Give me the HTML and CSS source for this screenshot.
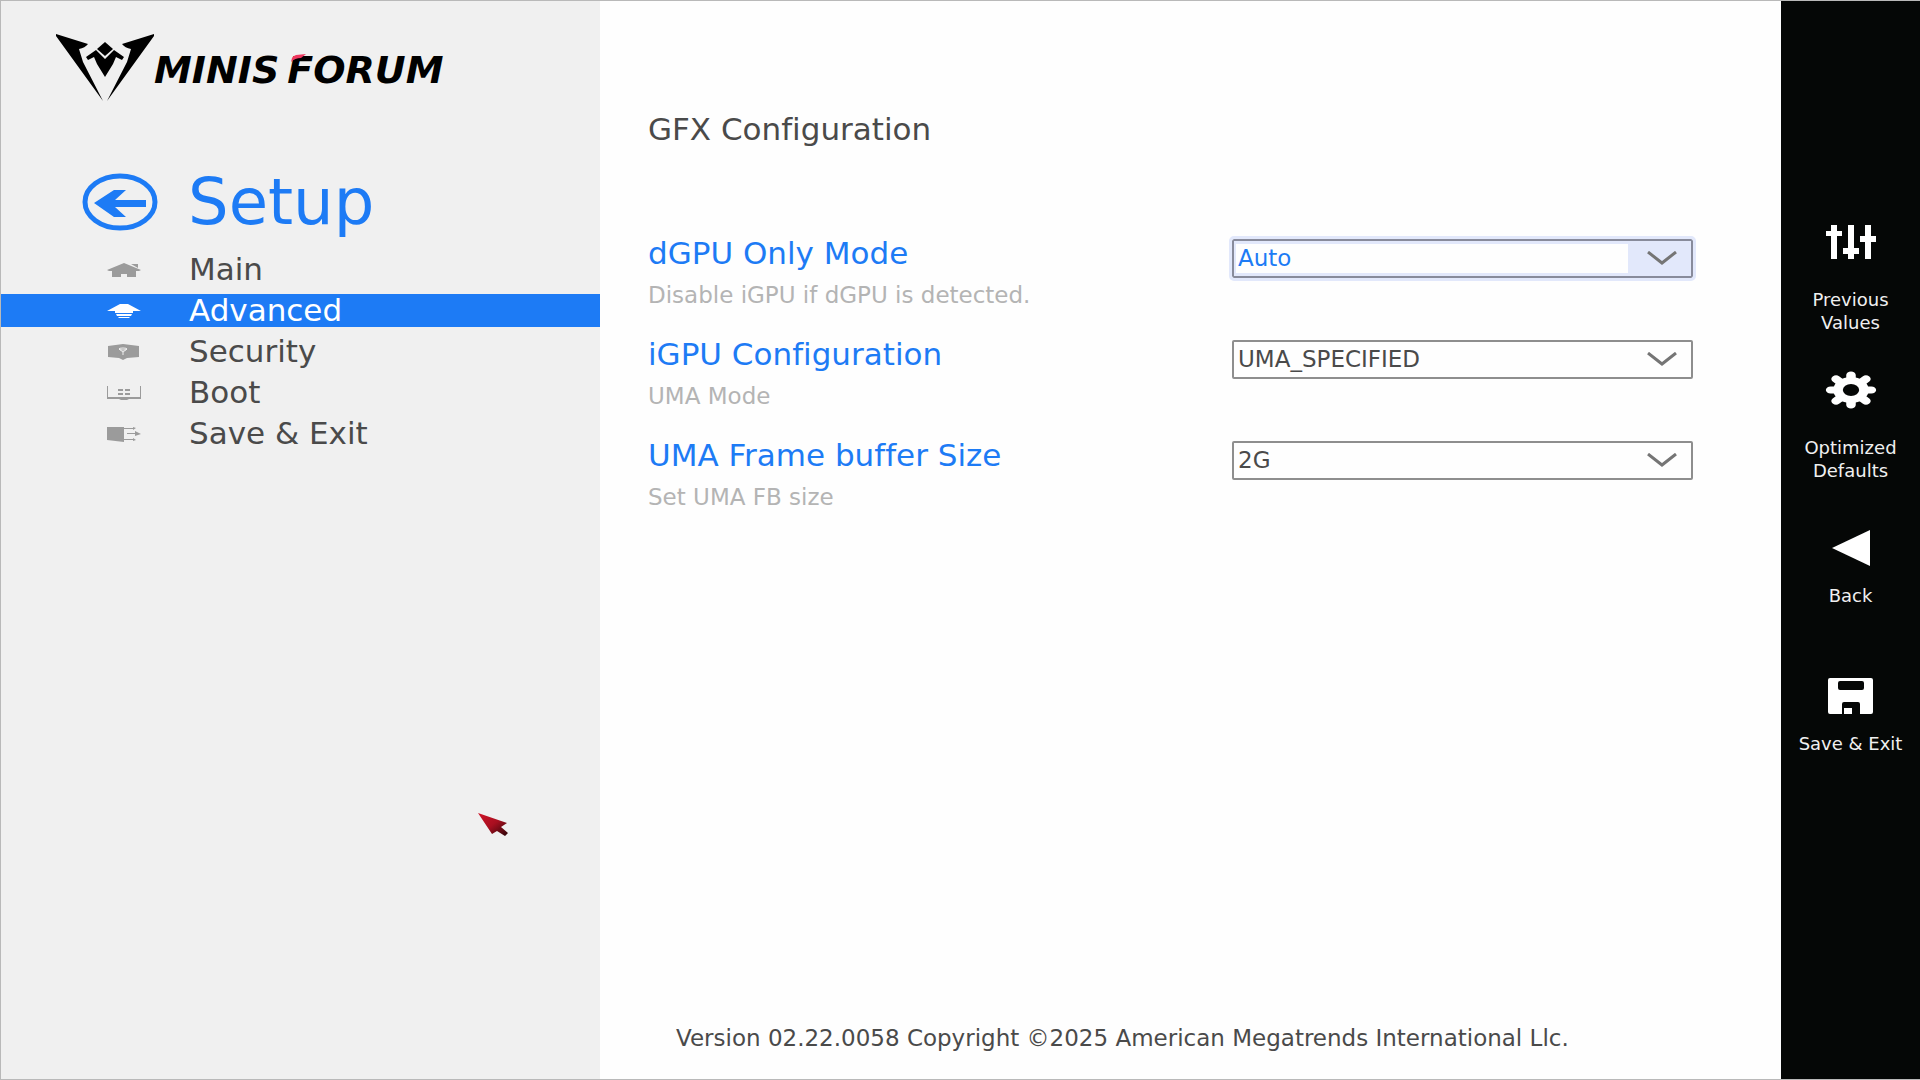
FILE: index.html
```
<!DOCTYPE html>
<html lang="en">
<head>
    <meta charset="UTF-8">
    <meta name="viewport" content="width=device-width, initial-scale=1.0">
    <title>Setup | GFX Configuration</title>
    <link rel="stylesheet" href="styles.css">
</head>
<body>
    <div class="screen">
        <aside class="sidebar">
            <div class="logo">
                <svg class="logo-mark" width="98" height="68" viewBox="0 0 98 68">
                    <path d="M0 0L32 10Q29 14 23 15L27 28L47 67L0 2z"/>
                    <path d="M98 0L66 10Q69 14 75 15L71 28L51 67L98 2z"/>
                    <path d="M49 8L57 15L49 22L41 15z"/>
                    <path d="M30 23L40 16L49 25L58 16L68 23L66 26L60 23L57 30L49 43L41 30L38 23L32 26z"/>
                </svg>
                <span class="logo-text">MINIS<span class="logo-second">FORUM<svg class="logo-accent" width="15" height="8" viewBox="0 0 15 8"><path d="M0 8L1 4Q2 2 5 1L15 0L10 4Q4 4 0 8z"/></svg></span></span>
            </div>
            <div class="setup">
                <button class="setup-back" type="button" aria-label="Back">
                    <svg width="76" height="58" viewBox="0 0 76 58">
                        <ellipse cx="38" cy="29" rx="35" ry="26" fill="none" stroke="#1d7bf5" stroke-width="5"/>
                        <path d="M12 30L32 17H44L33 27H64V34H33L44 44H32z" fill="#1d7bf5"/>
                    </svg>
                </button>
                <h1>Setup</h1>
            </div>
            <nav class="menu">
                <a href="#main">
                    <svg width="34" height="16" viewBox="0 0 34 16"><path d="M17 1L34 8L32 9H29V15H20V12H14V15H5V9H2L0 8zM24 2H31V6z"/></svg>
                    Main
                </a>
                <a href="#advanced" class="active">
                    <svg width="34" height="16" viewBox="0 0 34 16"><path d="M13 1H21L34 8H26V10H8V8H0zM9 11H25L24 13H10zM11 14H23L22 15H12z"/></svg>
                    Advanced
                </a>
                <a href="#security">
                    <svg width="34" height="16" viewBox="0 0 34 16"><path d="M1 2L16 0L32 2V13L20 14L16 16L12 14L1 13z"/><path d="M12 5L16 8L20 5M16 8V11" fill="none" stroke="#efefef"/><ellipse cx="16" cy="5" rx="4" ry="1" fill="none" stroke="#efefef"/></svg>
                    Security
                </a>
                <a href="#boot">
                    <svg width="34" height="16" viewBox="0 0 34 16"><path d="M0 1H1V12H33V1H34V14H22L20 15H14L12 14H0zM11 4H16V6H11zM18 4H23V6H18zM11 8H16V10H11zM18 8H23V10H18z"/></svg>
                    Boot
                </a>
                <a href="#exit">
                    <svg width="34" height="16" viewBox="0 0 34 16"><path d="M0 1H17V16L0 14zM17 2H26V1L29 2L26 4V3H17zM20 7H28V5L34 8L28 10V8H20zM17 13H26V12L29 14L26 15V14H17z"/></svg>
                    Save &amp; Exit
                </a>
            </nav>
        </aside>

        <main class="content">
            <h2>GFX Configuration</h2>
            <form class="options">
                <div class="option">
                    <div class="option-info">
                        <label for="dgpu">dGPU Only Mode</label>
                        <p>Disable iGPU if dGPU is detected.</p>
                    </div>
                    <div class="select-box selected">
                        <select id="dgpu"><option>Auto</option></select>
                        <svg class="chevron" width="32" height="14" viewBox="0 0 32 14"><path d="M2 1L16 12L30 1"/></svg>
                    </div>
                </div>
                <div class="option">
                    <div class="option-info">
                        <label for="igpu">iGPU Configuration</label>
                        <p>UMA Mode</p>
                    </div>
                    <div class="select-box">
                        <select id="igpu"><option>UMA_SPECIFIED</option></select>
                        <svg class="chevron" width="32" height="14" viewBox="0 0 32 14"><path d="M2 1L16 12L30 1"/></svg>
                    </div>
                </div>
                <div class="option">
                    <div class="option-info">
                        <label for="uma">UMA Frame buffer Size</label>
                        <p>Set UMA FB size</p>
                    </div>
                    <div class="select-box">
                        <select id="uma"><option>2G</option></select>
                        <svg class="chevron" width="32" height="14" viewBox="0 0 32 14"><path d="M2 1L16 12L30 1"/></svg>
                    </div>
                </div>
            </form>
            <footer>Version 02.22.0058 Copyright ©2025 American Megatrends International Llc.</footer>
        </main>

        <div class="actions">
            <button type="button">
                <svg width="52" height="54" viewBox="0 0 52 54"><path d="M6 9H12V43H6zM23 9H29V43H23zM40 9H46V43H40zM1 15H17V20H1zM18 32H34V38H18zM35 20H51V26H35z"/></svg>
                Previous Values
            </button>
            <button type="button">
                <svg width="52" height="54" viewBox="0 0 52 54">
                    <g transform="translate(26 26) scale(1.36 1)">
                        <circle r="13"/>
                        <path class="gear-teeth" d="M0 -15V15M-15 0H15M-11 -11L11 11M-11 11L11 -11"/>
                        <circle class="gear-hole" r="6"/>
                    </g>
                </svg>
                Optimized Defaults
            </button>
            <button type="button">
                <svg width="52" height="54" viewBox="0 0 52 54"><path d="M7 36L45 18V54z"/></svg>
                Back
            </button>
            <button type="button">
                <svg width="52" height="54" viewBox="0 0 52 54"><path fill-rule="evenodd" d="M5 18H46Q48 18 48 20V52Q48 54 46 54H35V44Q35 42 33 42H19Q17 42 17 44V54H5Q3 54 3 52V20Q3 18 5 18zM15 21Q13 21 13 23V28Q13 30 15 30H37Q39 30 39 28V23Q39 21 37 21zM19 48H27V54H19z"/></svg>
                Save &amp; Exit
            </button>
        </div>
    </div>

    <svg class="cursor" width="32" height="24" viewBox="0 0 32 24">
        <defs>
            <linearGradient id="cursor-red" x1="0" y1="0" x2="1" y2="1">
                <stop offset="0" stop-color="#d01428"/>
                <stop offset="0.5" stop-color="#a80f20"/>
                <stop offset="1" stop-color="#2a0508"/>
            </linearGradient>
        </defs>
        <path d="M0 0L29 10L23 14L30 20L27 23L19 18L14 21z" fill="url(#cursor-red)"/>
    </svg>
</body>
</html>
```
FILE: styles.css
```
* {
    box-sizing: border-box;
}

body {
    margin: 0;
    font-family: 'DejaVu Sans', sans-serif;
    font-variant-ligatures: none;
    color: #4a4a4a;
    background-color: #fefefe;
}

h1, h2, p {
    margin: 0;
    font-weight: normal;
}

button {
    padding: 0;
    border: 0;
    background: none;
    font-family: inherit;
}

.screen {
    display: flex;
    min-height: 100vh;
    border-top: 1px solid #b9b9b9;
    border-bottom: 1px solid #b9b9b9;
}

/* left column */
.sidebar {
    width: 31.25%;
    border-left: 1px solid #b9b9b9;
    background-color: #f0f0f0;
}

.logo {
    display: flex;
    align-items: flex-start;
    padding: 33px 0 0 55px;
}

.logo-mark {
    flex: none;
}

.logo-text {
    display: flex;
    gap: 8px;
    font-size: 38px;
    font-weight: bold;
    font-style: italic;
    line-height: 72px;
    color: #000;
}

.logo-second {
    position: relative;
}

.logo-accent {
    position: absolute;
    top: 20px;
    left: 4px;
    fill: #ee3860;
}

.setup {
    display: flex;
    align-items: center;
    gap: 30px;
    height: 72px;
    margin-top: 60px;
    padding-left: 81px;
}

.setup-back {
    height: 58px;
}

.setup h1 {
    font-size: 64px;
    line-height: 72px;
    color: #1d7bf5;
}

.menu {
    display: flex;
    flex-direction: column;
    gap: 8px;
    margin-top: 15px;
}

.menu a {
    display: flex;
    align-items: center;
    gap: 48px;
    height: 33px;
    padding-left: 106px;
    font-size: 31px;
    line-height: 33px;
    color: #4a4a4a;
    text-decoration: none;
}

.menu svg {
    fill: #9b9b9b;
}

.menu .active {
    color: #fff;
    background-color: #1d7bf5;
}

.menu .active svg {
    fill: #fff;
}

/* middle column */
.content {
    flex: 1;
    display: flex;
    flex-direction: column;
    padding: 108px 88px 25px 48px;
}

.content h2 {
    font-size: 31px;
    line-height: 40px;
}

.options {
    margin-top: 82px;
}

.option {
    display: grid;
    grid-template-columns: 1fr 461px;
    height: 101px;
}

.option label {
    font-size: 31px;
    line-height: 44px;
    color: #1d7bf5;
}

.option p {
    font-size: 23px;
    line-height: 40px;
    color: #b4b4b4;
}

.select-box {
    position: relative;
    height: 39px;
    margin-top: 8px;
}

.select-box select {
    appearance: none;
    display: block;
    width: 100%;
    height: 100%;
    padding: 0 72px 2px 4px;
    border: 2px solid #8e8e8e;
    border-radius: 2px;
    background-color: #fefefe;
    font-family: inherit;
    font-size: 23px;
    color: #4a4a4a;
}

.selected select {
    border-color: #888b9b;
    outline: 3px solid #e2e8fb;
    background: linear-gradient(#fefefe, #fefefe) 2px center / calc(100% - 65px) calc(100% - 6px) no-repeat #e2e8fb;
    color: #1d7bf5;
}

.chevron {
    position: absolute;
    top: 12px;
    right: 15px;
    fill: none;
    stroke: #757575;
    stroke-width: 3px;
    pointer-events: none;
}

footer {
    margin-top: auto;
    padding-left: 28px;
    font-size: 23px;
    line-height: 32px;
}

/* right column */
.actions {
    display: flex;
    flex-direction: column;
    width: 139px;
    padding-top: 215px;
    background-color: #050706;
}

.actions button {
    display: flex;
    flex-direction: column;
    align-items: center;
    gap: 18px;
    height: 148px;
    padding: 0 8px;
    font-size: 18px;
    line-height: 23px;
    color: #f0f0f0;
}

.actions svg {
    flex: none;
    fill: #fff;
}

.gear-teeth {
    stroke: #fff;
    stroke-width: 7px;
    stroke-linecap: round;
}

.actions .gear-hole {
    fill: #050706;
}

.cursor {
    position: absolute;
    top: 813px;
    left: 478px;
}
```
